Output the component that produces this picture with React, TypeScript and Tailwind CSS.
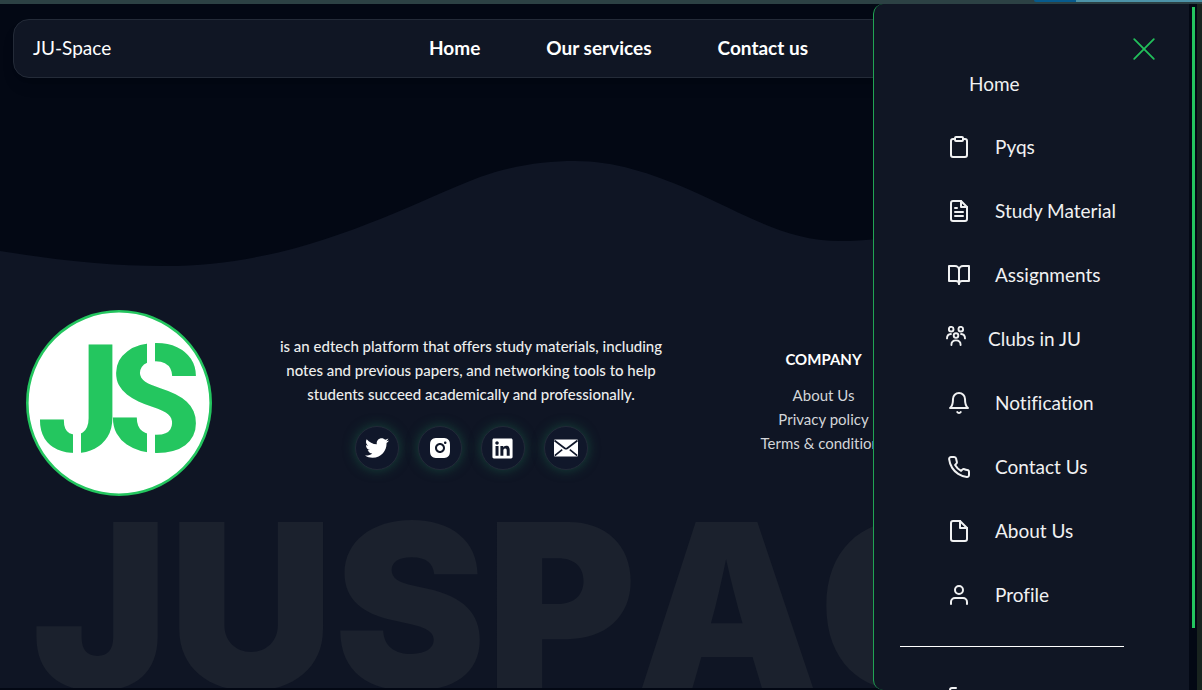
import React from "react";
import { FiClipboard, FiFileText, FiBookOpen, FiBell, FiPhone, FiFile, FiUser, FiLogOut } from "react-icons/fi";
import { RiInstagramFill } from "react-icons/ri";
import { FaLinkedin, FaTwitter } from "react-icons/fa";

function ClubsIcon({ className }: { className?: string }) {
  return (
    <svg viewBox="0 0 20 20" className={className} fill="none" stroke="currentColor" strokeWidth="1.9" strokeLinecap="round" aria-hidden="true">
      <circle cx="5.2" cy="3.2" r="2.3" />
      <circle cx="14.8" cy="3.2" r="2.3" />
      <circle cx="10" cy="9.6" r="2.3" />
      <path d="M1 12.4c0-2.6 1.5-4.2 3.9-4.4M19 12.4c0-2.6-1.5-4.2-3.9-4.4M5.4 19c0-3 1.8-4.6 4.6-4.6s4.6 1.6 4.6 4.6" />
    </svg>
  );
}

function EnvelopeIcon({ className }: { className?: string }) {
  return (
    <svg viewBox="0 0 24 24" className={className} aria-hidden="true">
      <rect y="3.5" width="24" height="17" rx="1" fill="currentColor" />
      <path d="M.5 4.5L10.7 12.2Q12 13.1 13.3 12.2L23.5 4.5M.8 19.6L8.2 13.6M23.2 19.6L15.8 13.6" fill="none" stroke="#10172a" strokeWidth="1.7" />
    </svg>
  );
}

function Logo() {
  return (
    <svg viewBox="0 0 186 186" className="size-[186px] shrink-0" role="img" aria-label="JU-Space">
      <circle cx="93" cy="93" r="91.7" fill="#fff" stroke="#24c65f" strokeWidth="2.6" />
      <g fontFamily="Roboto, sans-serif" fontWeight="800" fontSize="150" fill="#24c65f">
        <text x="11" y="142">J</text>
        <text x="82" y="142">S</text>
      </g>
      <g fill="#fff">
        <rect x="47" y="114" width="8" height="34" />
        <rect x="121" y="28" width="8" height="26" />
        <rect x="121" y="120" width="8" height="28" />
      </g>
    </svg>
  );
}

const menu = [
  { label: "Pyqs", Icon: FiClipboard },
  { label: "Study Material", Icon: FiFileText },
  { label: "Assignments", Icon: FiBookOpen },
  { label: "Clubs in JU", Icon: ClubsIcon, compact: true },
  { label: "Notification", Icon: FiBell },
  { label: "Contact Us", Icon: FiPhone },
  { label: "About Us", Icon: FiFile },
  { label: "Profile", Icon: FiUser },
];

const socials = [
  { label: "Twitter", Icon: FaTwitter },
  { label: "Instagram", Icon: RiInstagramFill },
  { label: "LinkedIn", Icon: FaLinkedin },
  { label: "Email", Icon: EnvelopeIcon },
];

export default function App() {
  return (
    <div className="relative h-screen overflow-hidden bg-[#030814] pt-1 font-['Lato',sans-serif] text-white [font-variant-ligatures:none]">
      <div className="absolute inset-x-0 top-0 flex h-1 justify-end bg-[#2c4144]">
        <div className="h-[2px] w-[42px] rounded-bl bg-[#075a8c]" />
        <div className="h-[2px] w-[126px] bg-[#4d93a8]" />
      </div>
      <header className="mx-[13px] mt-[15px] flex h-[59px] items-center rounded-2xl border border-[#242b38] bg-[#101624] pl-[19px] shadow-lg">
        <a href="#" className="w-[396px] text-[19px]">JU-Space</a>
        <nav className="flex gap-[66px] text-[19px] font-bold">
          <a href="#">Home</a>
          <a href="#services">Our services</a>
          <a href="#contact">Contact us</a>
        </nav>
      </header>

      <svg viewBox="0 0 1202 112" preserveAspectRatio="none" className="mt-[80px] block h-[112px] w-full" aria-hidden="true">
        <path fill="#0f1524" d="M0 93C55 102 110 108 165 108C300 108 400 50 480 19C515 7 545 3 575 3C615 3 650 15 690 32C745 56 785 83 840 83C930 83 1050 40 1202 40V112H0Z" />
      </svg>

      <footer className="bg-[#0f1524]">
        <div className="flex h-[245px] pt-[40px]">
          <div className="pl-[26px]">
            <Logo />
          </div>
          <div className="flex w-[518px] flex-col items-center pt-[24px]">
            <p className="w-[400px] text-center text-[15px] leading-6 font-medium text-[#eceded]">
              is an edtech platform that offers study materials, including
              <br />
              notes and previous papers, and networking tools to help
              <br />
              students succeed academically and professionally.
            </p>
            <div className="mt-[20px] flex gap-[19px]">
              {socials.map(({ label, Icon }) => (
                <a key={label} href="#" aria-label={label} className="flex size-11 items-center justify-center rounded-full border border-[#222938] bg-[#10172a] shadow-[0_0_12px_#16443a]">
                  <Icon className={label === "LinkedIn" ? "size-[23px]" : "size-6"} />
                </a>
              ))}
            </div>
          </div>
          <div className="flex w-[187px] flex-col items-center pt-[37px] text-[15px] leading-6 whitespace-nowrap">
            <h2 className="mb-[12px] font-bold">COMPANY</h2>
            <a href="#about" className="text-[#d3d5d9]">About Us</a>
            <a href="#privacy" className="text-[#d3d5d9]">Privacy policy</a>
            <a href="#terms" className="text-[#d3d5d9]">Terms &amp; conditions</a>
          </div>
        </div>
        <div className="h-[173px] overflow-hidden pl-[32px] font-['Inter',sans-serif] text-[229px] leading-[181px] font-black whitespace-nowrap text-[#1b212d] [font-kerning:none]">JUSPACE</div>
      </footer>

      <aside className="absolute top-1 right-0 bottom-0 flex w-[329px]">
        <div className="flex-1 overflow-hidden rounded-l-[10px] border-l border-[#21a454] bg-[#101624] text-[19px] text-[#f0f1f2]">
          <div className="flex justify-end pt-[33px] pr-[33px]">
            <button aria-label="Close menu" className="text-[#22c05b]">
              <svg viewBox="0 0 24 24" className="size-6" fill="none" stroke="currentColor" strokeWidth="1.8" strokeLinecap="round">
                <path d="M2.2 2.2L21.8 21.8M21.8 2.2L2.2 21.8" />
              </svg>
            </button>
          </div>
          <nav>
            <a href="#" className="block pl-[95px] leading-[45px]">Home</a>
            <ul className="pt-[9px]">
              {menu.map(({ label, Icon, compact }) => (
                <li key={label}>
                  <a href="#" className={compact ? "flex h-16 items-center gap-[22px] pl-[72px]" : "flex h-16 items-center gap-[24px] pl-[73px]"}>
                    <Icon className={compact ? "mb-[6px] size-5" : "size-6"} />
                    <span>{label}</span>
                  </a>
                </li>
              ))}
            </ul>
            <hr className="mt-[19px] mr-[65px] ml-[26px] border-white" />
            <a href="#" className="mt-[18px] flex h-16 items-center gap-[24px] pl-[73px]">
              <FiLogOut className="size-6" />
              <span>Logout</span>
            </a>
          </nav>
        </div>
        <div className="flex w-2 justify-center bg-[#030814] pt-[3px]">
          <div className="h-[621px] w-[3px] bg-[#24c65f]" />
        </div>
        <div className="w-[5px] bg-[#18231f]" />
      </aside>
    </div>
  );
}
